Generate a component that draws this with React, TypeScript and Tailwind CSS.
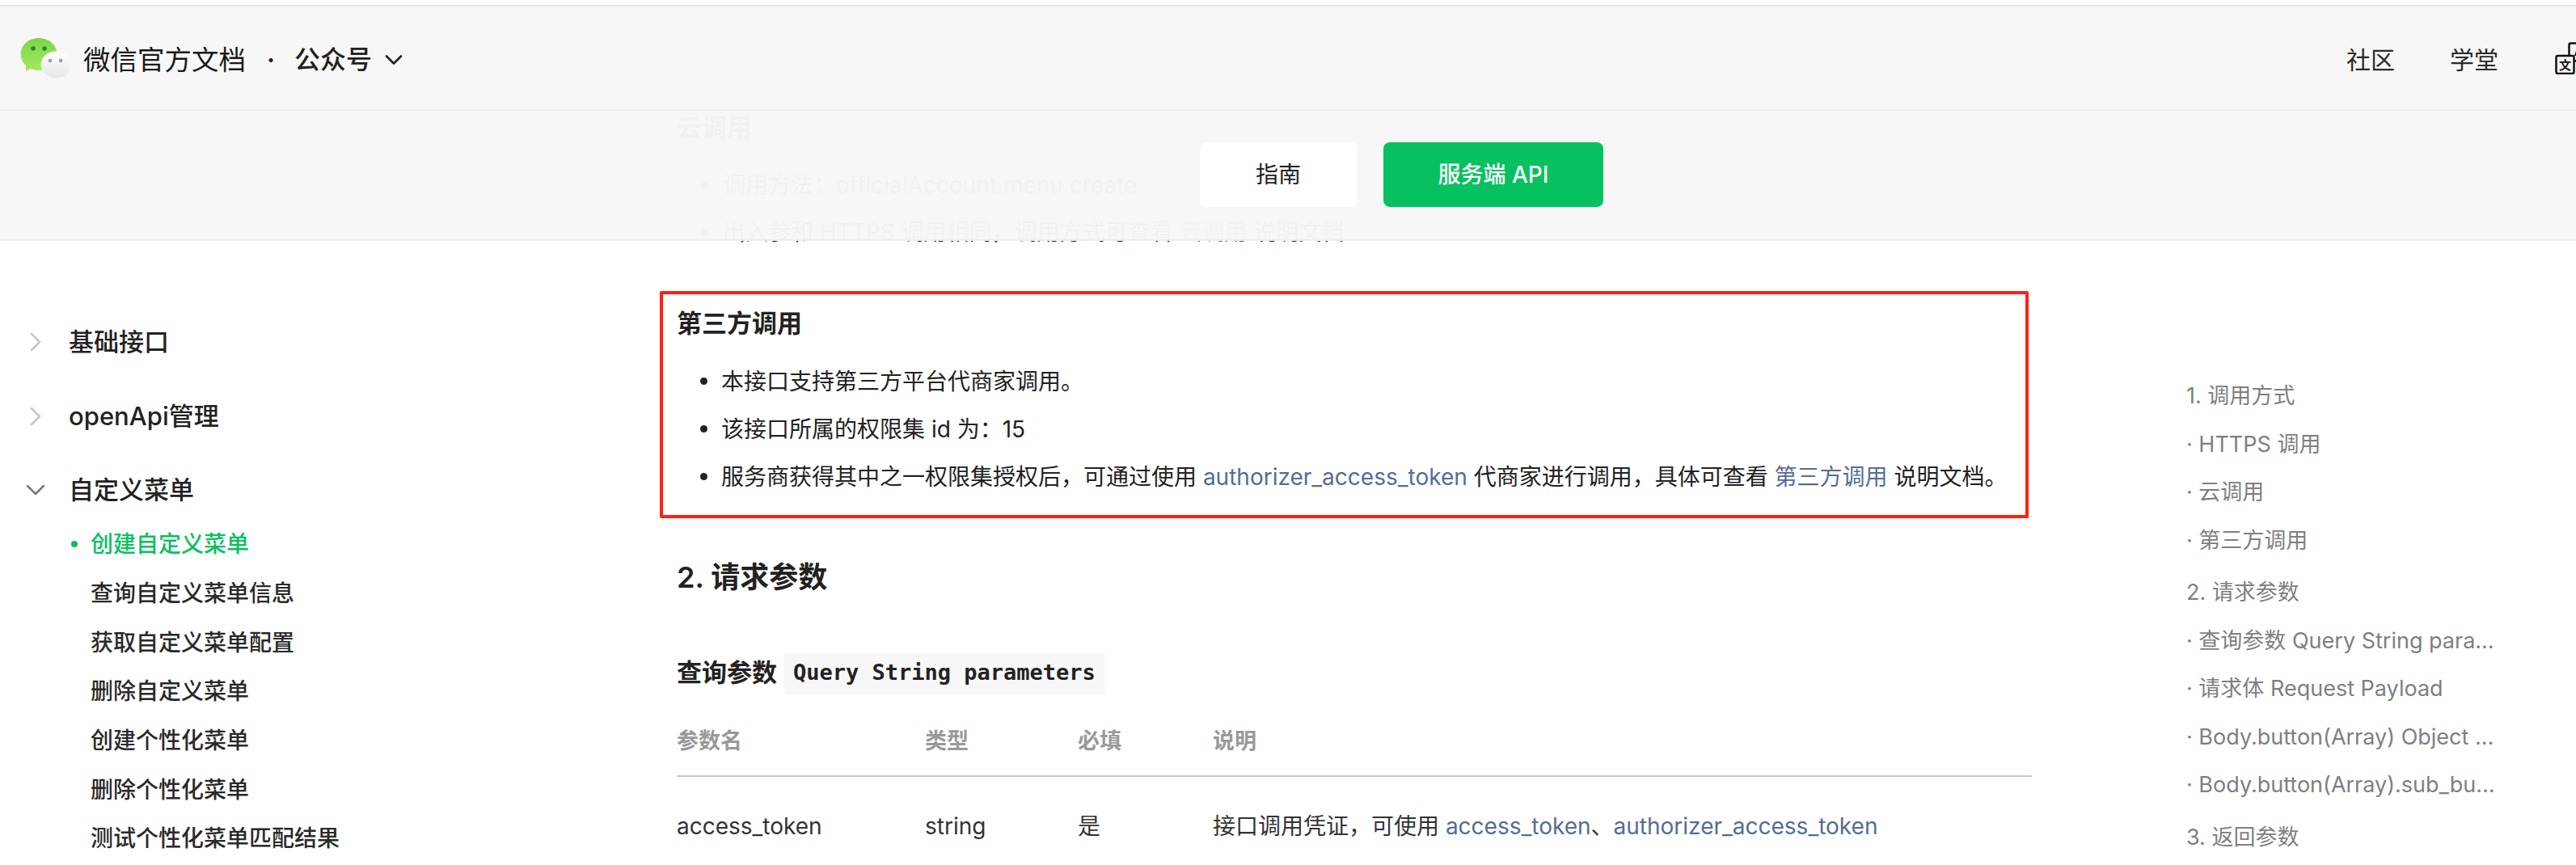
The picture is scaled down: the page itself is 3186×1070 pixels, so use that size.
import { ChevronDown, ChevronRight } from 'lucide-react'

const subMenu = ['查询自定义菜单信息', '获取自定义菜单配置', '删除自定义菜单', '创建个性化菜单', '删除个性化菜单', '测试个性化菜单匹配结果']

const tocItems = [
  { label: '1. 调用方式', top: true },
  { label: '· HTTPS 调用' },
  { label: '· 云调用' },
  { label: '· 第三方调用' },
  { label: '2. 请求参数', top: true },
  { label: '· 查询参数 Query String parameters' },
  { label: '· 请求体 Request Payload' },
  { label: '· Body.button(Array) Object Payload' },
  { label: '· Body.button(Array).sub_button(Array)' },
  { label: '3. 返回参数', top: true },
]

function WeChatLogo() {
  return (
    <svg width="64" height="52" viewBox="0 0 64 52" aria-hidden="true" className="mt-[-3px] shrink-0">
      <defs>
        <linearGradient id="greenBubble" x1="0" y1="0" x2="0" y2="1">
          <stop offset="0" stopColor="#7ad64a" />
          <stop offset="1" stopColor="#a6e85e" />
        </linearGradient>
        <linearGradient id="whiteBubble" x1="0" y1="0" x2="0" y2="1">
          <stop offset="0" stopColor="#ffffff" />
          <stop offset="1" stopColor="#e4e6ea" />
        </linearGradient>
      </defs>
      <path d="M7 33 L7 41 L15 37 Z" fill="#a0e55a" />
      <ellipse cx="23" cy="20" rx="22.5" ry="20" fill="url(#greenBubble)" />
      <circle cx="16" cy="13" r="2.8" fill="#1f8a2c" />
      <circle cx="30" cy="13" r="2.8" fill="#1f8a2c" />
      <path d="M52 42 L56 50 L47 45 Z" fill="#e6e8ec" />
      <ellipse cx="44" cy="33" rx="18.5" ry="16.5" fill="url(#whiteBubble)" />
      <circle cx="37" cy="28" r="2.4" fill="#a0a2a6" />
      <circle cx="50" cy="28" r="2.4" fill="#a0a2a6" />
    </svg>
  )
}

function LanguageIcon() {
  return (
    <svg width="64" height="40" viewBox="0 0 64 40" aria-hidden="true" className="mt-[-4px] shrink-0">
      <rect x="17.5" y="1.5" width="22" height="22" rx="2" fill="none" stroke="#111" strokeWidth="2.5" />
      <rect x="1.5" y="17" width="22" height="22" rx="2" fill="#f7f7f7" stroke="#111" strokeWidth="2.5" />
      <text x="12.5" y="34" textAnchor="middle" fontSize="15" fontWeight="700" fill="#111" fontFamily="'Noto Sans CJK SC', sans-serif">
        文
      </text>
      <text x="28.5" y="17" textAnchor="middle" fontSize="14" fontWeight="700" fill="#111" fontFamily="'Liberation Sans', sans-serif">
        A
      </text>
    </svg>
  )
}

function Header() {
  return (
    <header className="absolute left-0 right-0 top-[6px] z-10 overflow-hidden border-y-2 border-t-[#e5e5e5] border-b-[#eeeeee] bg-[#f7f7f7]/[0.975]">
      <div className="flex h-[129px] items-center border-b-2 border-[#ececec] pl-[25px] pt-[5px]">
        <WeChatLogo />
        <span className="ml-[14px] text-[33.5px] text-[#1a1a1a]">微信官方文档</span>
        <span className="ml-[26px] text-[30px] font-bold text-[#222]">·</span>
        <span className="ml-[24px] text-[32px] font-medium text-[#222]">公众号</span>
        <ChevronDown className="ml-[9px] h-[36px] w-[36px] text-[#222]" strokeWidth={1.75} />
        <nav className="ml-auto mr-[-38px] flex items-center text-[30px] text-[#2a2a2a]">
          <span>社区</span>
          <span className="ml-[68px]">学堂</span>
          <span className="ml-[70px] flex">
            <LanguageIcon />
          </span>
        </nav>
      </div>
      <div className="flex h-[159px] gap-[33px] pl-[1484px] pt-[39px]">
        <button type="button" className="h-[80px] w-[194px] rounded-[8px] bg-white text-[28px] text-[#222]">
          指南
        </button>
        <button type="button" className="h-[80px] w-[272px] rounded-[8px] bg-[#07c160] text-[28px] font-medium text-white">
          服务端 API
        </button>
      </div>
    </header>
  )
}

function Sidebar() {
  return (
    <aside className="w-[837px] shrink-0 pt-[393px]">
      <div className="mb-[32px] flex h-[60px] items-center pl-[24px]">
        <ChevronRight className="h-[40px] w-[40px] text-[#c6c6c6]" strokeWidth={1.5} />
        <span className="ml-[21px] text-[31px] font-medium text-[#222]">基础接口</span>
      </div>
      <div className="mb-[31px] flex h-[60px] items-center pl-[24px]">
        <ChevronRight className="h-[40px] w-[40px] text-[#c6c6c6]" strokeWidth={1.5} />
        <span className="ml-[21px] text-[31px] font-medium text-[#222]">openApi管理</span>
      </div>
      <div className="mb-[7px] flex h-[60px] items-center pl-[24px]">
        <ChevronDown className="h-[40px] w-[40px] text-[#777]" strokeWidth={1.5} />
        <span className="ml-[21px] text-[31px] font-medium text-[#222]">自定义菜单</span>
      </div>
      <ul className="pl-[112px] text-[28px] font-medium text-[#2a2a2a]">
        <li className="relative flex h-[60.7px] items-center text-[#07c160]">
          <span className="absolute left-[-24px] h-[8px] w-[8px] rounded-full bg-[#07c160]" />
          创建自定义菜单
        </li>
        {subMenu.map((item) => (
          <li className="flex h-[60.7px] items-center" key={item}>
            {item}
          </li>
        ))}
      </ul>
    </aside>
  )
}

function Bullet({ children }: { children: React.ReactNode }) {
  return (
    <li className="relative flex h-[59px] items-center whitespace-pre pl-[55px]">
      <span className="absolute left-[29px] h-[9px] w-[9px] rounded-full bg-[#222]" />
      {children}
    </li>
  )
}

function Content() {
  return (
    <main className="w-[1676px] shrink-0 pt-[136px] text-[28px] text-[#222]">
      <h3 className="h-[44px] text-[31px] font-semibold leading-[44px]">云调用</h3>
      <ul className="mt-[20px]">
        <li className="relative flex h-[58px] items-center whitespace-pre pl-[57px]">
          <span className="absolute left-[30px] h-[9px] w-[9px] rounded-full bg-[#222]" />
          调用方法：officialAccount.menu.create
        </li>
        <li className="relative flex h-[58px] items-center whitespace-pre pl-[57px]">
          <span className="absolute left-[30px] h-[9px] w-[9px] rounded-full bg-[#222]" />
          出入参和 HTTPS 调用相同，调用方式可查看 <a className="text-[#576b95]">云调用</a> 说明文档
        </li>
      </ul>

      <section className="ml-[-21px] mr-[4px] mt-[44px] rounded-[2px] border-4 border-[#ff2015] pb-[17.5px] pl-[17px] pt-[14px]">
        <h3 className="h-[44px] text-[31px] font-semibold leading-[44px]">第三方调用</h3>
        <ul className="mt-[20px]">
          <Bullet>本接口支持第三方平台代商家调用。</Bullet>
          <Bullet>该接口所属的权限集 id 为：15</Bullet>
          <Bullet>
            服务商获得其中之一权限集授权后，可通过使用 <a className="text-[#576b95]">authorizer_access_token</a> 代商家进行调用，具体可查看 <a className="text-[#576b95]">第三方调用</a> 说明文档。
          </Bullet>
        </ul>
      </section>

      <h2 className="mt-[48px] h-[50px] text-[36px] font-semibold leading-[50px]">2. 请求参数</h2>

      <h3 className="mt-[68px] flex h-[52px] items-center text-[31px] font-semibold">
        查询参数
        <code className="ml-[9px] flex h-[52px] items-center rounded-[4px] bg-[#f7f7f7] px-[11px] font-['DejaVu_Sans_Mono',monospace] text-[27px] font-bold">
          Query String parameters
        </code>
      </h3>

      <table className="mt-[17px] w-full table-fixed text-left">
        <thead>
          <tr className="h-[84px] border-b-2 border-[#c8c8c8] text-[27px] font-semibold text-[#999]">
            <th className="w-[307px] font-semibold">参数名</th>
            <th className="w-[189px] font-semibold">类型</th>
            <th className="w-[167px] font-semibold">必填</th>
            <th className="font-semibold">说明</th>
          </tr>
        </thead>
        <tbody className="text-[28px] text-[#333]">
          <tr className="h-[124px]">
            <td>access_token</td>
            <td>string</td>
            <td>是</td>
            <td>
              接口调用凭证，可使用 <a className="text-[#576b95]">access_token</a>、<a className="text-[#576b95]">authorizer_access_token</a>
            </td>
          </tr>
        </tbody>
      </table>
    </main>
  )
}

function Toc() {
  return (
    <nav className="ml-[191px] w-[387px] shrink-0 pt-[460px] text-[27px] text-[#7f7f7f]">
      {tocItems.map((item, index) => (
        <div
          key={item.label}
          className={item.top && index > 0 ? 'mt-[5px] h-[59.5px] truncate leading-[59.5px]' : 'h-[59.5px] truncate leading-[59.5px]'}
        >
          {item.label}
        </div>
      ))}
    </nav>
  )
}

export default function App() {
  return (
    <div className="relative flex h-[1070px] w-[3186px] overflow-hidden bg-white font-[Inter,'Noto_Sans_CJK_SC',sans-serif]">
      <Header />
      <Sidebar />
      <Content />
      <Toc />
    </div>
  )
}
